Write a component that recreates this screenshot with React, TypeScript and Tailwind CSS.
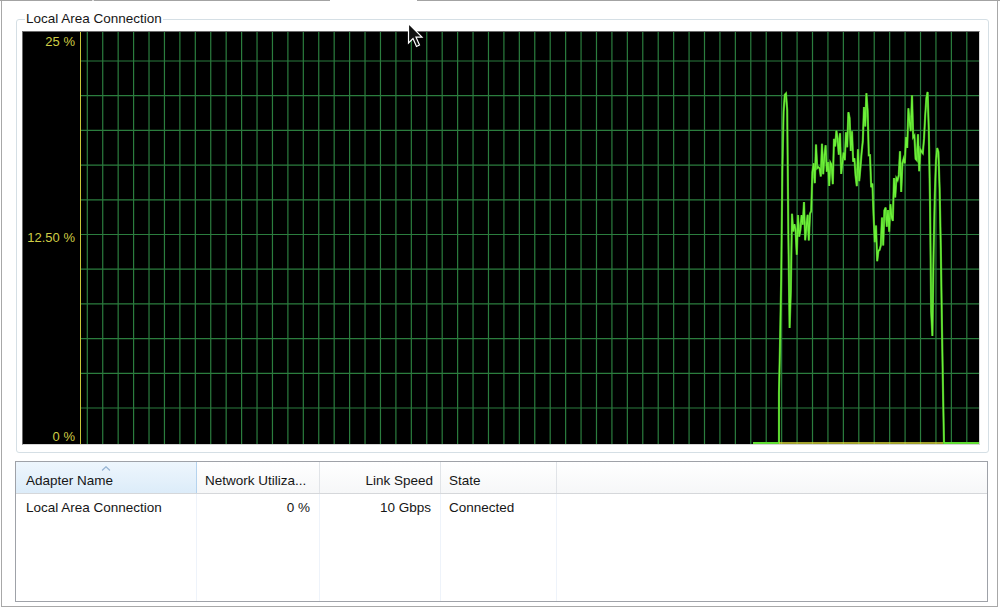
import React from "react";

// envelope of the received-bytes curve, page coordinates
const env: [number, number][] = [
  [779, 393], [781, 300], [782, 200], [783, 120], [785, 92], [787, 95], [788, 170], [789, 340],
  [790, 320], [792, 230], [796, 225], [800, 230], [805, 225], [810, 215], [813, 180], [818, 160],
  [823, 158], [828, 175], [832, 160], [836, 140], [840, 158], [844, 150], [848, 130], [852, 145],
  [856, 165], [861, 178], [864, 120], [866, 88], [868, 115], [870, 165], [873, 215], [876, 245],
  [880, 240], [884, 230], [888, 215], [892, 205], [896, 195], [900, 165], [905, 155], [910, 125],
  [912, 105], [914, 130], [917, 158], [921, 165], [924, 140], [926, 100], [928, 90], [929, 140],
  [930, 200], [931, 300], [932, 360], [933, 300], [934, 220], [936, 160], [938, 140], [940, 200],
  [941, 260], [942, 330], [943, 390], [944, 443],
];

function envAt(x: number) {
  for (let i = 0; i < env.length - 1; i++) {
    const [x0, y0] = env[i];
    const [x1, y1] = env[i + 1];
    if (x >= x0 && x <= x1) return y0 + ((y1 - y0) * (x - x0)) / (x1 - x0);
  }
  return 443;
}

function buildLine() {
  const pts: string[] = ["753,443", "779,443", "779,393"];
  for (let x = 780; x < 944; x += 1.2) {
    let y = envAt(x);
    if (x > 790 && x < 925) {
      y += 15 * Math.sin(x * 2.1) + 10 * Math.sin(x * 4.7 + 1.3) + 7 * Math.sin(x * 9.1 + 0.7);
    }
    y = Math.max(70, Math.min(443, y));
    pts.push(`${x.toFixed(1)},${y.toFixed(1)}`);
  }
  pts.push("944,443", "979,443");
  return pts.join(" ");
}

const vLines = Array.from({ length: 58 }, (_, k) => 87.3 + 15.43 * k);
const hLines = Array.from({ length: 11 }, (_, k) => 61 + 34.7 * k);

function Graph() {
  const line = buildLine();
  return (
    <div className="relative w-[958px] h-[414px] border border-t-[#6b6b6b] border-l-[#6b6b6b] border-b-[#d6d6d6] border-r-[#d6d6d6] bg-black">
      <svg className="absolute inset-0" width="956" height="412" viewBox="23 32 956 412">
        {vLines.map((x) => (
          <line key={x} x1={x} y1={32} x2={x} y2={444} stroke="#2b7d3e" strokeWidth={1.2} />
        ))}
        {hLines.map((y) => (
          <line key={y} x1={81} y1={y} x2={979} y2={y} stroke="#2b7d3e" strokeWidth={1.2} />
        ))}
        <line x1={80.5} y1={32} x2={80.5} y2={444} stroke="#c9c83a" strokeWidth={1} />
        <polyline points={line} fill="none" stroke="#3fa020" strokeWidth={2.2} />
        <polyline points={line} fill="none" stroke="#6cf038" strokeWidth={1.3} />
        <line x1={779} y1={443} x2={943} y2={443} stroke="#d9d83c" strokeWidth={1.4} />
      </svg>
      <div className="absolute left-0 top-0 w-[52px] h-full text-right text-[13px] leading-[14px] text-[#cfcd45]">
        <span className="absolute right-0 top-[3px]">25 %</span>
        <span className="absolute right-0 top-[199px]">12.50 %</span>
        <span className="absolute right-0 top-[398px]">0 %</span>
      </div>
    </div>
  );
}

function SortArrow() {
  return (
    <svg className="absolute left-1/2 top-[4px] -translate-x-1/2" width="9" height="5" viewBox="0 0 9 5">
      <path d="M0.5 4.5 L4.5 0.8 L8.5 4.5" fill="none" stroke="#97b4d3" strokeWidth={1.3} />
    </svg>
  );
}

function ListView() {
  return (
    <div className="ml-[13px] mt-[8px] w-[973px] h-[141px] border border-[#9fa2a8] bg-white flex flex-col">
      <div className="flex h-[32px] border-b border-[#d5d7da]">
        <div className="relative w-[181px] flex items-center pl-[10px] pt-[7px] border-r border-[#b5d3ee] bg-gradient-to-b from-[#eef6fd] to-[#dcecf9]">
          <SortArrow />
          Adapter Name
        </div>
        <div className="w-[123px] flex items-center pl-[8px] pt-[7px] border-r border-[#e1e4e8] bg-gradient-to-b from-white to-[#f6f7f8] whitespace-nowrap">
          Network Utiliza...
        </div>
        <div className="w-[121px] flex items-center justify-end pr-[7px] pt-[7px] border-r border-[#e1e4e8] bg-gradient-to-b from-white to-[#f6f7f8]">
          Link Speed
        </div>
        <div className="w-[116px] flex items-center pl-[8px] pt-[7px] border-r border-[#e1e4e8] bg-gradient-to-b from-white to-[#f6f7f8]">
          State
        </div>
        <div className="flex-1 bg-gradient-to-b from-white to-[#f6f7f8]" />
      </div>
      <div className="flex flex-1">
        <div className="w-[181px] border-r border-[#eef3fa] pl-[10px]">
          <div className="h-[24px] mt-[2px] flex items-center">Local Area Connection</div>
        </div>
        <div className="w-[123px] border-r border-[#eef3fa] pr-[9px]">
          <div className="h-[24px] mt-[2px] flex items-center justify-end">0 %</div>
        </div>
        <div className="w-[121px] border-r border-[#eef3fa] pr-[9px]">
          <div className="h-[24px] mt-[2px] flex items-center justify-end">10 Gbps</div>
        </div>
        <div className="w-[116px] border-r border-[#eef3fa] pl-[8px]">
          <div className="h-[24px] mt-[2px] flex items-center">Connected</div>
        </div>
        <div className="flex-1" />
      </div>
    </div>
  );
}

function Cursor() {
  return (
    <svg className="absolute left-[407px] top-[22px]" width="18" height="28" viewBox="0 0 18 28">
      <path
        d="M1.5 1.5 L1.5 21 L6 16.5 L9.5 24.5 L12.5 23 L9 15.2 L15 15.2 Z"
        fill="#111"
        stroke="#fff"
        strokeWidth={1.2}
        strokeLinejoin="miter"
      />
    </svg>
  );
}

export default function App() {
  return (
    <div className="relative w-[1000px] h-[608px] bg-white overflow-hidden font-['Liberation_Sans',Arial,sans-serif] text-[13.5px] text-[#161616]">
      {/* tab strip bottom edge, selected tab leaves a gap */}
      <div className="flex h-[1px]">
        <div className="w-[92px] bg-[#a3a3a3]" />
        <div className="w-[2px] bg-[#e2e2e2]" />
        <div className="w-[236px] bg-[#a3a3a3]" />
        <div className="w-[87px] bg-white" />
        <div className="flex-1 bg-[#a3a3a3]" />
      </div>
      <div className="ml-[1px] w-[997px] h-[606px] border-x border-b border-[#a8a8a8] flex flex-col">
        <div className="relative ml-[14px] mt-[18px] w-[973px] h-[434px] border border-[#d5dfe5] rounded-[3px] pl-[5px] pt-[11px]">
          <span className="absolute left-[8px] -top-[9px] px-[1px] bg-white leading-[16px]">Local Area Connection</span>
          <Graph />
        </div>
        <ListView />
      </div>
      <Cursor />
    </div>
  );
}
